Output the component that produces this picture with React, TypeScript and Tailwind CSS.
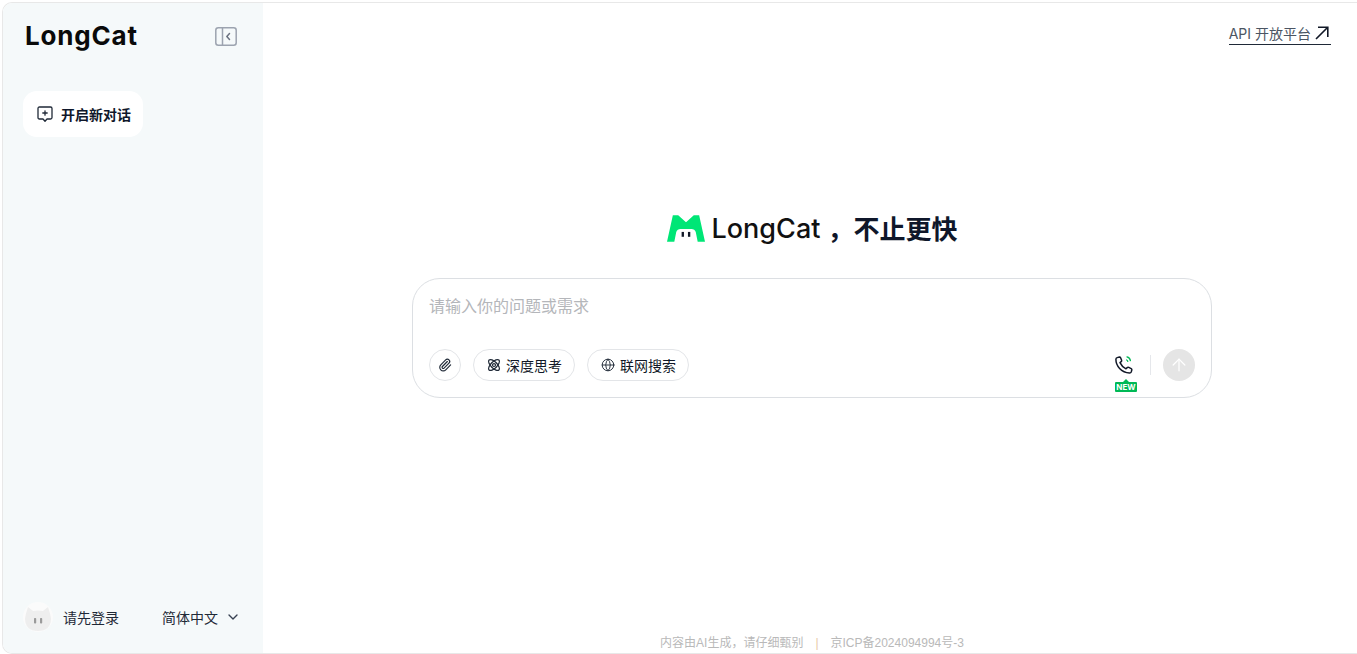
import React from "react";
import { ArrowUp, ChevronDown, Globe, Paperclip } from "lucide-react";

const CJK = "font-['Inter','Noto_Sans_CJK_SC',sans-serif]";

function CatFace({ className }: { className?: string }) {
  return (
    <svg viewBox="0 0 30 30" className={className}>
      <circle cx="15" cy="15" r="15" fill="#fbfbfb" />
      <path d="M5 5 L10 9 Q15 8 20 9 L25 5 Q27.5 12 28 17 Q27.5 29 15 29 Q2.5 29 2 17 Q2.5 12 5 5 Z" fill="#eeeeee" />
      <rect x="11" y="16" width="2.2" height="5.5" rx="0.8" fill="#9b9b9b" />
      <rect x="17" y="16" width="2.2" height="5.5" rx="0.8" fill="#9b9b9b" />
    </svg>
  );
}

function Logo() {
  return (
    <svg viewBox="0 0 39 28" className="w-[38px] h-[28px]">
      <path d="M6 0 L11.5 0 L19.5 7 L27.5 0 L33 0 L39 27 L31.5 27 L29.5 17 Q28.5 14 25 14 L14 14 Q10.5 14 9.5 17 L7.5 27 L0 27 Z" fill="#00e676" />
      <rect x="15" y="17" width="2.4" height="5" fill="#111827" />
      <rect x="21.5" y="17" width="2.4" height="5" fill="#111827" />
    </svg>
  );
}

function Atom() {
  return (
    <svg viewBox="0 0 16 16" className="w-[14px] h-[14px]" fill="none" stroke="#1f2937" strokeWidth="1.4">
      <ellipse cx="8" cy="8" rx="8" ry="3.6" transform="rotate(45 8 8)" />
      <ellipse cx="8" cy="8" rx="8" ry="3.6" transform="rotate(-45 8 8)" />
      <circle cx="8" cy="8" r="1.7" />
    </svg>
  );
}

function Phone() {
  return (
    <svg viewBox="0 0 20 20" className="w-[20px] h-[20px]" fill="none" strokeLinecap="round" strokeLinejoin="round">
      <path d="M3.2 2.6 L5.4 2 Q6.2 1.9 6.6 2.8 L7.6 5.2 Q7.9 6 7.2 6.6 L6 7.6 Q7.8 11.6 12 13.8 L13.2 12.6 Q13.9 12 14.7 12.4 L17.2 13.6 Q18.1 14.1 17.8 15 L17.2 17 Q16.8 18 15.6 18 Q9.6 17.6 5.6 13.4 Q1.9 9.4 1.9 4.2 Q2 3 3.2 2.6 Z" stroke="#111827" strokeWidth="1.5" />
      <path d="M13 1.8 A4.5 4.5 0 0 1 16.4 5.6" stroke="#00b956" strokeWidth="1.3" />
      <path d="M12.6 5 A1.8 1.8 0 0 1 13.8 6.4" stroke="#00b956" strokeWidth="1.3" />
    </svg>
  );
}

function CollapseIcon() {
  return (
    <svg viewBox="0 0 22 19" className="w-[22px] h-[19px]" fill="none" stroke="#9ca3af" strokeWidth="1.5">
      <rect x="0.8" y="0.8" width="20.4" height="17.4" rx="2.5" />
      <path d="M7.5 1 V18" />
      <path d="M14.5 6.5 L11.8 9.5 L14.5 12.5" stroke="#6b7280" strokeLinecap="round" strokeLinejoin="round" />
    </svg>
  );
}

function NewChatIcon() {
  return (
    <svg viewBox="0 0 16 17" className="w-[16px] h-[17px]" fill="none" stroke="#1f2937" strokeWidth="1.3" strokeLinecap="round" strokeLinejoin="round">
      <path d="M2.5 1 H13.5 Q15 1 15 2.5 V11.5 Q15 13 13.5 13 H10 L8 15.2 L6 13 H2.5 Q1 13 1 11.5 V2.5 Q1 1 2.5 1 Z" />
      <path d="M8 4.8 V9.2 M5.8 7 H10.2" />
    </svg>
  );
}

function ExternalArrow() {
  return (
    <svg viewBox="0 0 14 14" className="w-[14px] h-[14px]" fill="none" stroke="#111827" strokeWidth="1.6">
      <path d="M1 13 L12.5 1.5 M3 1.2 H12.8 V11" />
    </svg>
  );
}

function Pill({ icon, label }: { icon: React.ReactNode; label: string }) {
  return (
    <div className="h-[32px] pl-[13px] pr-[12px] flex items-center gap-[5px] rounded-full border border-[#e3e5e8] text-[14px] text-[#111827]">
      {icon}
      <span>{label}</span>
    </div>
  );
}

export default function App() {
  return (
    <div className={`h-[654px] w-[1357px] overflow-hidden bg-white pl-[2px] pt-[2px] ${CJK}`}>
      <div className="h-[652px] flex border-t border-l border-b border-[#e8e8e8] rounded-l-[10px] overflow-hidden">
        <aside className="w-[260px] shrink-0 bg-[#f5f9fa] flex flex-col pl-[20px] pr-[22px]">
          <div className="h-[66px] flex items-center justify-between pl-[2px] pr-[4px]">
            <span className="text-[26px] leading-none font-bold text-[#0a0a0a] font-['Inter',sans-serif] tracking-[0.8px]">LongCat</span>
            <CollapseIcon />
          </div>
          <div className="mt-[22px] w-[120px] h-[46px] rounded-[14px] bg-white flex items-center pl-[14px] gap-[8px]">
            <NewChatIcon />
            <span className="text-[14px] font-bold text-[#0f172a]">开启新对话</span>
          </div>
          <div className="mt-auto mb-[21px] flex items-center">
            <CatFace className="w-[30px] h-[30px]" />
            <span className="ml-[10px] text-[14px] text-[#1f2937]">请先登录</span>
            <span className="ml-auto text-[14px] text-[#1f2937]">简体中文</span>
            <ChevronDown className="w-[16px] h-[16px] ml-[7px] text-[#374151]" strokeWidth={2} />
          </div>
        </aside>
        <main className="flex-1 flex flex-col items-center pl-[4px]">
          <div className="self-end mt-[19px] mr-[26px] pr-[2px] h-[23px] flex items-center gap-[4px] border-b border-[#1f2937] text-[14px] text-[#4b5563]">
            <span>API 开放平台</span>
            <ExternalArrow />
          </div>
          <div className="mt-[167px] h-[34px] flex items-center">
            <Logo />
            <span className="ml-[7px] text-[27px] font-medium text-[#111111]">LongCat</span>
            <span className="ml-[7px] text-[26px] font-bold text-[#0f172a]">，不止更快</span>
          </div>
          <div className="mt-[32px] w-[800px] h-[120px] rounded-[28px] border border-[#dcdfe3] flex flex-col px-[16px] pt-[15px] pb-[16px]">
            <div className="text-[16px] leading-[24px] text-[#b4b6ba]">请输入你的问题或需求</div>
            <div className="mt-auto flex items-center">
              <div className="w-[32px] h-[32px] rounded-full border border-[#e3e5e8] flex items-center justify-center mr-[12px]">
                <Paperclip className="w-[14px] h-[14px] text-[#1f2937]" strokeWidth={2} />
              </div>
              <Pill icon={<Atom />} label="深度思考" />
              <div className="w-[12px]" />
              <Pill icon={<Globe className="w-[14px] h-[14px] text-[#1f2937]" strokeWidth={1.6} />} label="联网搜索" />
              <div className="ml-auto relative w-[20px] h-[20px] mr-[16px]">
                <Phone />
                <span className="absolute left-[1px] top-[27px] w-[22px] h-[10px] bg-[#00b956] text-white text-[8px] leading-[10px] font-bold text-center rounded-[1px]">NEW</span>
                <span className="absolute left-[9px] top-[24px] w-0 h-0 border-l-[3px] border-r-[3px] border-b-[3px] border-l-transparent border-r-transparent border-b-[#00b956]" />
              </div>
              <div className="w-px h-[20px] bg-[#e5e7eb] mr-[12px]" />
              <div className="w-[32px] h-[32px] rounded-full bg-[#e5e5e5] flex items-center justify-center">
                <ArrowUp className="w-[20px] h-[20px] text-white" strokeWidth={1.5} />
              </div>
            </div>
          </div>
          <div className="mt-auto mb-[2px] h-[16px] flex items-center text-[12px] text-[#b9b9b9] font-['Liberation_Sans','Noto_Sans_CJK_SC',sans-serif]">
            <span>内容由AI生成，请仔细甄别</span>
            <span className="mx-[12px] text-[#e8c9a8]">|</span>
            <span>京ICP备2024094994号-3</span>
          </div>
        </main>
      </div>
    </div>
  );
}
